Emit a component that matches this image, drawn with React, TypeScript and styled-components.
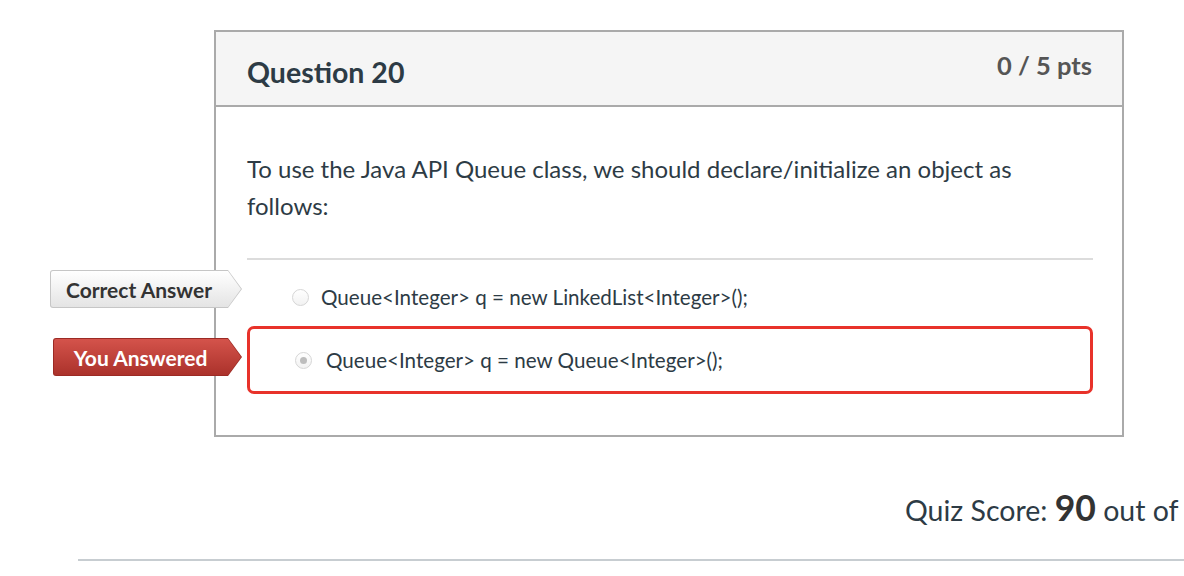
import styled, { createGlobalStyle } from "styled-components";

const TEXT = "#2d3b45";
const BORDER = "#aaaaaa";

const GlobalStyle = createGlobalStyle`
  html, body {
    margin: 0;
    padding: 0;
    background: #ffffff;
    overflow: hidden;
  }
  body {
    font-family: Lato, "Open Sans", sans-serif;
    color: ${TEXT};
  }
`;

const Page = styled.div`
  width: 1184px;
  height: 576px;
  padding-top: 30px;
  box-sizing: border-box;
`;

const Card = styled.section`
  width: 910px;
  margin-left: 214px;
  border: 2px solid ${BORDER};
  box-sizing: border-box;
  background: #fff;
`;

const CardHeader = styled.header`
  display: flex;
  justify-content: space-between;
  align-items: flex-start;
  height: 75px;
  padding: 0 30px 0 31px;
  box-sizing: border-box;
  background: #f5f5f5;
  border-bottom: 2px solid ${BORDER};
`;

const Title = styled.h2`
  margin: 23px 0 0;
  font-size: 28.5px;
  font-weight: 700;
  line-height: 34px;
  color: ${TEXT};
`;

const Points = styled.div`
  margin-top: 18px;
  font-size: 25.5px;
  font-weight: 700;
  line-height: 30px;
  color: #555555;
`;

const CardBody = styled.div`
  padding: 43px 29px 41px 31px;
`;

const Prompt = styled.p`
  margin: 0;
  padding-right: 40px;
  font-size: 24px;
  line-height: 37px;
  color: ${TEXT};
`;

const Divider = styled.hr`
  margin: 34px 0 0;
  border: none;
  border-top: 2px solid #dcdcdc;
`;

const AnswerList = styled.div`
  display: flex;
  flex-direction: column;
`;

const AnswerRow = styled.div<{ $chosen?: boolean }>`
  position: relative;
  display: flex;
  align-items: center;
  gap: ${(p) => (p.$chosen ? "14px" : "12px")};
  height: ${(p) => (p.$chosen ? "68px" : "66px")};
  padding-top: ${(p) => (p.$chosen ? "0" : "8px")};
  padding-left: ${(p) => (p.$chosen ? "45px" : "42px")};
  box-sizing: border-box;
  border: 3px solid ${(p) => (p.$chosen ? "#e8322a" : "transparent")};
  border-radius: 7px;
`;

const Radio = styled.span<{ $checked?: boolean }>`
  position: relative;
  width: 15px;
  height: 15px;
  border-radius: 50%;
  border: 1px solid #d6d6d6;
  background: linear-gradient(#ffffff, #f2f2f2);
  flex: none;

  &::after {
    content: "";
    display: ${(p) => (p.$checked ? "block" : "none")};
    position: absolute;
    left: 4px;
    top: 4px;
    width: 7px;
    height: 7px;
    border-radius: 50%;
    background: #bdbdbd;
  }
`;

const AnswerText = styled.span`
  font-size: 20.6px;
  color: ${TEXT};
  white-space: nowrap;
`;

type TagTone = "neutral" | "wrong";

const TagOuter = styled.div<{ $tone: TagTone; $width: number; $left: number; $top: number }>`
  position: absolute;
  left: ${(p) => p.$left}px;
  top: ${(p) => p.$top}px;
  width: ${(p) => p.$width}px;
  height: 38px;
  padding: 1px;
  box-sizing: border-box;
  background: ${(p) => (p.$tone === "wrong" ? "#9c2a24" : "#c6c6c6")};
  clip-path: polygon(0 0, calc(100% - 14px) 0, 100% 50%, calc(100% - 14px) 100%, 0 100%);
  border-radius: 3px 0 0 3px;
`;

const TagInner = styled.div<{ $tone: TagTone }>`
  height: 100%;
  display: flex;
  align-items: center;
  justify-content: center;
  padding-right: 14px;
  box-sizing: border-box;
  background: ${(p) =>
    p.$tone === "wrong"
      ? "linear-gradient(#d4534b, #ab322b)"
      : "linear-gradient(#ffffff, #e4e4e4)"};
  clip-path: polygon(0 0, calc(100% - 13px) 0, 100% 50%, calc(100% - 13px) 100%, 0 100%);
  border-radius: 2px 0 0 2px;
  font-size: 21px;
  font-weight: 700;
  color: ${(p) => (p.$tone === "wrong" ? "#ffffff" : "#333333")};
  white-space: nowrap;
`;

const ScoreLine = styled.div`
  margin-top: 51px;
  padding-left: 905px;
  font-size: 28.5px;
  line-height: 40px;
  color: ${TEXT};
  white-space: nowrap;
`;

const ScoreValue = styled.strong`
  font-size: 35.5px;
  font-weight: 700;
  color: #333;
`;

const BottomRule = styled.hr`
  margin: 29px 0 0 78px;
  width: 1106px;
  border: none;
  border-top: 2px solid #c7cdd1;
`;

function Tag({ tone, label, width, left, top }: { tone: TagTone; label: string; width: number; left: number; top: number }) {
  return (
    <TagOuter $tone={tone} $width={width} $left={left} $top={top}>
      <TagInner $tone={tone}>{label}</TagInner>
    </TagOuter>
  );
}

export default function App() {
  return (
    <Page>
      <GlobalStyle />
      <Card>
        <CardHeader>
          <Title>Question 20</Title>
          <Points>0 / 5 pts</Points>
        </CardHeader>
        <CardBody>
          <Prompt>
            To use the Java API Queue class, we should declare/initialize an object as follows:
          </Prompt>
          <Divider />
          <AnswerList>
            <AnswerRow>
              <Tag tone="neutral" label="Correct Answer" width={192} left={-200} top={7} />
              <Radio />
              <AnswerText>Queue&lt;Integer&gt; q = new LinkedList&lt;Integer&gt;();</AnswerText>
            </AnswerRow>
            <AnswerRow $chosen>
              <Tag tone="wrong" label="You Answered" width={189} left={-197} top={9} />
              <Radio $checked />
              <AnswerText>Queue&lt;Integer&gt; q = new Queue&lt;Integer&gt;();</AnswerText>
            </AnswerRow>
          </AnswerList>
        </CardBody>
      </Card>
      <ScoreLine>
        Quiz Score: <ScoreValue>90</ScoreValue> out of
      </ScoreLine>
      <BottomRule />
    </Page>
  );
}
